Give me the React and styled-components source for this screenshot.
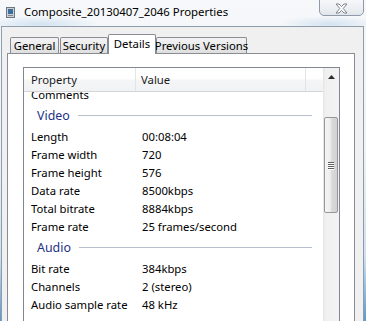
import React from 'react';
import styled, { createGlobalStyle } from 'styled-components';

const GlobalStyle = createGlobalStyle`
  html, body {
    margin: 0;
    padding: 0;
    background: #ffffff;
  }
`;

const Frame = styled.div`
  width: 366px;
  height: 321px;
  overflow: hidden;
  display: flex;
  flex-direction: column;
  font-family: "Noto Sans", "Open Sans", sans-serif;
  font-size: 11.3px;
  color: #000;
  background:
    radial-gradient(ellipse 60px 8px at 40px 24px, rgba(150, 190, 225, 0.35), transparent),
    radial-gradient(ellipse 50px 8px at 330px 24px, rgba(150, 190, 225, 0.35), transparent),
    linear-gradient(180deg, #f6f8fa 0%, #eef3f8 45%, #cfe0f0 80%, #5d97d0 100%);
`;

const TitleBar = styled.div`
  height: 26px;
  flex-shrink: 0;
  display: flex;
  align-items: flex-start;
  justify-content: space-between;
`;

const TitleGroup = styled.div`
  display: flex;
  align-items: center;
  gap: 9px;
  padding: 4px 0 0 6px;
`;

const TitleText = styled.span`
  font-size: 11.4px;
  line-height: 16px;
  color: #000;
`;

const CloseButton = styled.div`
  width: 45px;
  height: 19px;
  margin: -3px 2px 0 0;
  border: 1px solid #8e9aaa;
  border-radius: 0 0 5px 5px;
  background: linear-gradient(180deg, #f8f9fb 0%, #eceff3 60%, #e2e6eb 100%);
  display: flex;
  align-items: center;
  justify-content: center;
  padding-top: 3px;
  box-sizing: border-box;
`;

const Body = styled.div`
  flex: 1;
  display: flex;
  flex-direction: column;
  margin: 0 2px 0 1px;
  border: 1px solid #8f9cab;
  border-bottom: none;
  background: #f0f0f0;
  padding: 7px 8px 0 5px;
  min-height: 0;
`;

const TabRow = styled.div`
  height: 19px;
  flex-shrink: 0;
  display: flex;
  align-items: flex-end;
  padding-left: 3px;
`;

const Tab = styled.div`
  width: ${(p) => p.$w}px;
  height: ${(p) => (p.$active ? 20 : 16)}px;
  margin-bottom: ${(p) => (p.$active ? -1 : 0)}px;
  margin-right: ${(p) => (p.$gap ? 1 : 0)}px;
  box-sizing: border-box;
  border: 1px solid #898c95;
  border-bottom: none;
  border-radius: 2px 2px 0 0;
  background: ${(p) =>
    p.$active ? '#ffffff' : 'linear-gradient(180deg, #f3f3f3 0%, #ebebeb 50%, #dedede 100%)'};
  position: relative;
  z-index: ${(p) => (p.$active ? 1 : 0)};
  display: flex;
  align-items: center;
  justify-content: center;
  padding-bottom: ${(p) => (p.$active ? 2 : 0)}px;
  white-space: nowrap;
  color: #000;
`;

const Panel = styled.div`
  flex: 1;
  display: flex;
  flex-direction: column;
  background: #ffffff;
  border: 1px solid #898c95;
  border-bottom: none;
  padding: 13px 14px 0 15px;
  min-height: 0;
`;

const List = styled.div`
  flex: 1;
  display: flex;
  border: 1px solid #828790;
  border-bottom: none;
  min-height: 0;
`;

const ListMain = styled.div`
  flex: 1;
  display: flex;
  flex-direction: column;
  overflow: hidden;
`;

const Header = styled.div`
  height: 24px;
  flex-shrink: 0;
  display: flex;
  box-sizing: border-box;
  border-bottom: 1px solid #d5d5d5;
  background: linear-gradient(180deg, #ffffff 0%, #ffffff 45%, #f4f5f7 55%, #f1f2f4 100%);
`;

const HeaderCell = styled.div`
  width: ${(p) => (p.$w ? `${p.$w}px` : 'auto')};
  flex: ${(p) => (p.$w ? 'none' : 1)};
  box-sizing: border-box;
  border-right: ${(p) => (p.$w ? '1px solid #e3e4e6' : 'none')};
  padding-left: ${(p) => p.$pad || 0}px;
  display: flex;
  align-items: center;
  color: #1a1a1a;
`;

const Rows = styled.div`
  flex: 1;
  overflow: hidden;
`;

const Scrolled = styled.div`
  margin-top: -7px;
`;

const Row = styled.div`
  height: 18px;
  display: flex;
  align-items: center;
  white-space: nowrap;
`;

const PropCell = styled.div`
  width: 118px;
  flex-shrink: 0;
  box-sizing: border-box;
  padding-left: 7px;
`;

const ValueCell = styled.div`
  flex: 1;
`;

const Group = styled.div`
  height: 24px;
  display: flex;
  align-items: center;
  gap: 8px;
  padding: 0 11px 0 13px;
  font-size: 12.4px;
  color: #1e3287;

  &::after {
    content: '';
    flex: 1;
    height: 1px;
    background: #b6c0cd;
    margin-top: 1px;
  }
`;

const Scrollbar = styled.div`
  width: 16px;
  flex-shrink: 0;
  display: flex;
  flex-direction: column;
  background: linear-gradient(90deg, #e4e4e4 0%, #f0f0f0 15%, #f2f2f2 100%);
`;

const ArrowButton = styled.div`
  height: 17px;
  display: flex;
  align-items: center;
  justify-content: center;
`;

const Thumb = styled.div`
  margin: 32px 1px 0 1px;
  height: 96px;
  box-sizing: border-box;
  border: 1px solid #979797;
  border-radius: 2px;
  background: linear-gradient(90deg, #f6f6f6 0%, #ececec 45%, #dadada 55%, #d2d2d2 100%);
  display: flex;
  align-items: center;
  justify-content: center;
`;

const Gripper = styled.div`
  width: 6px;
  display: flex;
  flex-direction: column;
  gap: 1px;

  span {
    height: 1px;
    background: #5f5f5f;
    box-shadow: 0 1px 0 #ffffff;
  }
`;

const FileIcon = () => (
  <svg width="9" height="11" viewBox="0 0 9 11">
    <rect x="0.5" y="0.5" width="8" height="10" fill="#c9d0d8" stroke="#6e7782" />
    <rect x="2" y="2" width="5" height="5" fill="#3d6f9e" />
    <rect x="2" y="8" width="5" height="1" fill="#7d8894" />
  </svg>
);

const CloseGlyph = () => (
  <svg width="13" height="11" viewBox="0 0 13 11">
    <path
      d="M1 1 H4 L6.5 3.6 L9 1 H12 L8.2 5.5 L12 10 H9 L6.5 7.4 L4 10 H1 L4.8 5.5 Z"
      fill="#ffffff"
      stroke="#7a838d"
      strokeWidth="1"
      strokeLinejoin="round"
    />
  </svg>
);

const UpArrow = () => (
  <svg width="7" height="4" viewBox="0 0 7 4">
    <path d="M0 4 L3.5 0 L7 4 Z" fill="#2b2b2b" />
  </svg>
);

const tabs = [
  { label: 'General', w: 49, gap: true },
  { label: 'Security', w: 48 },
  { label: 'Details', w: 48, active: true },
  { label: 'Previous Versions', w: 91 },
];

const sections = [
  { type: 'row', name: 'Comments', value: '' },
  { type: 'group', name: 'Video' },
  { type: 'row', name: 'Length', value: '00:08:04' },
  { type: 'row', name: 'Frame width', value: '720' },
  { type: 'row', name: 'Frame height', value: '576' },
  { type: 'row', name: 'Data rate', value: '8500kbps' },
  { type: 'row', name: 'Total bitrate', value: '8884kbps' },
  { type: 'row', name: 'Frame rate', value: '25 frames/second' },
  { type: 'group', name: 'Audio' },
  { type: 'row', name: 'Bit rate', value: '384kbps' },
  { type: 'row', name: 'Channels', value: '2 (stereo)' },
  { type: 'row', name: 'Audio sample rate', value: '48 kHz' },
];

const App = () => (
  <Frame>
    <GlobalStyle />
    <TitleBar>
      <TitleGroup>
        <FileIcon />
        <TitleText>Composite_20130407_2046 Properties</TitleText>
      </TitleGroup>
      <CloseButton>
        <CloseGlyph />
      </CloseButton>
    </TitleBar>
    <Body>
      <TabRow>
        {tabs.map((t) => (
          <Tab key={t.label} $w={t.w} $active={t.active} $gap={t.gap}>
            {t.label}
          </Tab>
        ))}
      </TabRow>
      <Panel>
        <List>
          <ListMain>
            <Header>
              <HeaderCell $w={112} $pad={7}>Property</HeaderCell>
              <HeaderCell $w={170} $pad={5}>Value</HeaderCell>
              <HeaderCell />
            </Header>
            <Rows>
              <Scrolled>
                {sections.map((s) =>
                  s.type === 'group' ? (
                    <Group key={s.name}>{s.name}</Group>
                  ) : (
                    <Row key={s.name}>
                      <PropCell>{s.name}</PropCell>
                      <ValueCell>{s.value}</ValueCell>
                    </Row>
                  )
                )}
              </Scrolled>
            </Rows>
          </ListMain>
          <Scrollbar>
            <ArrowButton>
              <UpArrow />
            </ArrowButton>
            <Thumb>
              <Gripper>
                <span />
                <span />
                <span />
                <span />
              </Gripper>
            </Thumb>
          </Scrollbar>
        </List>
      </Panel>
    </Body>
  </Frame>
);

export default App;
